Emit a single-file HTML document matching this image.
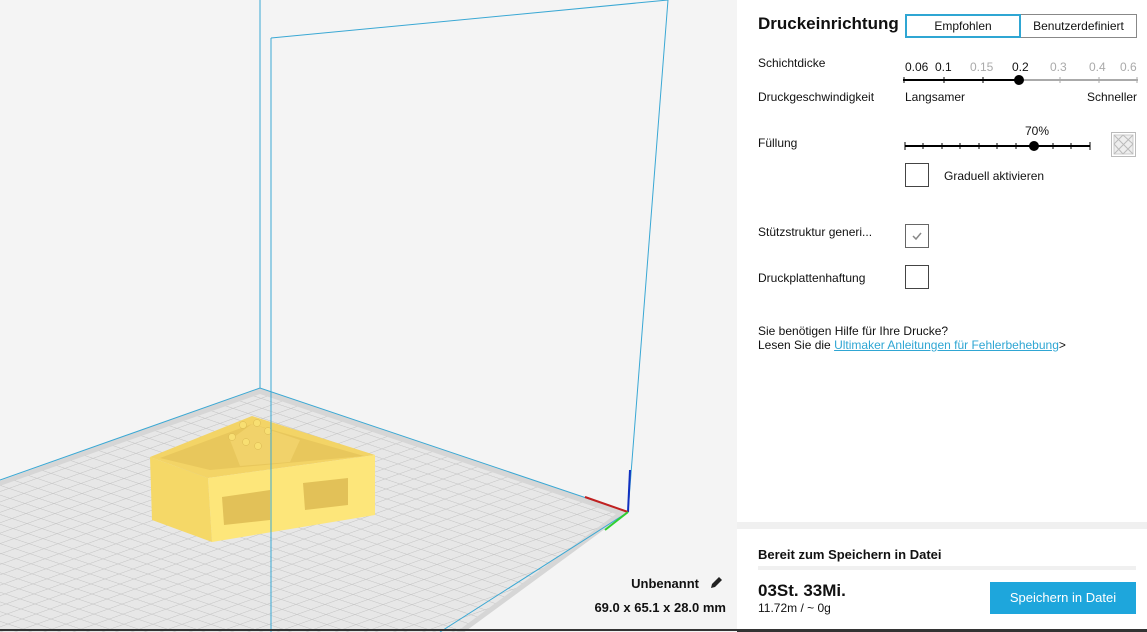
<!DOCTYPE html>
<html><head><meta charset="utf-8"><style>
*{margin:0;padding:0;box-sizing:border-box}
body{width:1147px;height:632px;overflow:hidden;background:#f4f4f4;font-family:"Liberation Sans",sans-serif;color:#111;position:relative}
.vp{position:absolute;left:0;top:0;width:737px;height:632px}
.panel{position:absolute;left:737px;top:0;width:410px;height:632px;background:#fff}
.t{position:absolute;white-space:nowrap}
.s{font-size:12px}
.cb{position:absolute;width:24px;height:24px;border:1px solid #444;background:#fff}
</style></head><body>
<svg class="vp" width="737" height="632" viewBox="0 0 737 632">
<defs>
<pattern id="g" width="10" height="10" patternUnits="userSpaceOnUse" patternTransform="matrix(1.5 0.505 -1.4 0.5 260 388)">
<rect width="10" height="10" fill="#e7e7e7"/>
<path d="M0 0H10M0 0V10" stroke="#c6c6c6" stroke-width="1.1" fill="none"/>
</pattern>
</defs>
<rect width="737" height="632" fill="#f4f4f4"/>
<polygon points="260,388 628,512 440,650 -40,650 -40,495" fill="#d6d6d6"/>
<polygon points="260,394 616,514 432,650 -40,650 -40,500" fill="url(#g)"/>
<g stroke="#3aa8d4" stroke-width="1" fill="none">
<polyline points="0,480 260,388 628,512 440,632"/>
<line x1="260" y1="0" x2="260" y2="388"/>
<line x1="271" y1="38" x2="271" y2="632"/>
<line x1="271" y1="38" x2="668" y2="0"/>
<line x1="668" y1="0" x2="628" y2="512"/>
</g>
<line x1="630" y1="470" x2="628" y2="512" stroke="#1030c0" stroke-width="2"/>
<line x1="585" y1="497" x2="628" y2="512" stroke="#c02020" stroke-width="2"/>
<line x1="628" y1="512" x2="605" y2="530" stroke="#30d030" stroke-width="2"/>
<!-- model -->
<polygon points="150,457 252,416 375,455 208,478" fill="#f3d466"/>
<polygon points="160,458 252,424 364,456 210,470" fill="#e8c75c"/>
<polygon points="230,440 252,424 300,440 290,462 240,466" fill="#f1d26a"/>
<polygon points="208,478 375,455 375,515 212,542" fill="#fde67a"/>
<polygon points="150,457 208,478 212,542 152,520" fill="#f5d867"/>
<polygon points="222,497 270,490 270,520 224,525" fill="#e2c158"/>
<polygon points="303,483 348,478 348,505 305,510" fill="#e2c158"/>
<g fill="#f8df72" stroke="#d9b850" stroke-width="0.5"><circle cx="243" cy="425" r="3.5"/><circle cx="257" cy="423" r="3.5"/><circle cx="268" cy="431" r="3.5"/><circle cx="232" cy="437" r="3.5"/><circle cx="246" cy="442" r="3.5"/><circle cx="258" cy="446" r="3.5"/></g>
<line x1="271" y1="420" x2="271" y2="545" stroke="#3aa8d4"/>
<line x1="0" y1="630" x2="737" y2="630" stroke="#333" stroke-width="2"/>
</svg>
<div class="t" style="right:448px;top:576px;font-size:13px;font-weight:bold">Unbenannt</div>
<svg style="position:absolute;left:708px;top:575px" width="16" height="16" viewBox="0 0 16 16"><path d="M3 13l1-4 7-7 3 3-7 7z" fill="#222"/></svg>
<div class="t" style="right:421px;top:600px;font-size:13px;font-weight:bold">69.0 x 65.1 x 28.0 mm</div>

<div class="panel"></div>
<div class="t" style="left:758px;top:14px;font-size:17px;font-weight:bold">Druckeinrichtung</div>
<div style="position:absolute;left:905px;top:14px;width:116px;height:24px;border:2px solid #2fa6d3;font-size:12px;text-align:center;line-height:20px">Empfohlen</div>
<div style="position:absolute;left:1021px;top:14px;width:116px;height:24px;border:1px solid #888;border-left:none;font-size:12px;text-align:center;line-height:22px">Benutzerdefiniert</div>
<div class="t s" style="left:758px;top:56px">Schichtdicke</div>
<div class="t s" style="left:905px;top:60px">0.06</div>
<div class="t s" style="left:935px;top:60px">0.1</div>
<div class="t s" style="left:970px;top:60px;color:#aaa">0.15</div>
<div class="t s" style="left:1012px;top:60px">0.2</div>
<div class="t s" style="left:1050px;top:60px;color:#aaa">0.3</div>
<div class="t s" style="left:1089px;top:60px;color:#aaa">0.4</div>
<div class="t s" style="left:1120px;top:60px;color:#aaa">0.6</div>
<svg style="position:absolute;left:900px;top:72px" width="240" height="16">
<line x1="3" y1="8" x2="120" y2="8" stroke="#000" stroke-width="2"/>
<line x1="120" y1="8" x2="238" y2="8" stroke="#aaa" stroke-width="2"/>
<g stroke="#000"><line x1="4" y1="5" x2="4" y2="11"/><line x1="44" y1="5" x2="44" y2="11"/><line x1="83" y1="5" x2="83" y2="11"/></g>
<g stroke="#aaa"><line x1="160" y1="5" x2="160" y2="11"/><line x1="199" y1="5" x2="199" y2="11"/><line x1="237" y1="5" x2="237" y2="11"/></g>
<circle cx="119" cy="8" r="5" fill="#000"/></svg>
<div class="t s" style="left:758px;top:90px">Druckgeschwindigkeit</div>
<div class="t s" style="left:905px;top:90px">Langsamer</div>
<div class="t s" style="left:1087px;top:90px">Schneller</div>
<div class="t s" style="left:758px;top:136px">Füllung</div>
<div class="t s" style="left:1025px;top:124px">70%</div>
<svg style="position:absolute;left:900px;top:138px" width="195" height="16">
<line x1="5" y1="8" x2="190" y2="8" stroke="#000" stroke-width="2"/>
<g stroke="#000"><line x1="5" y1="4" x2="5" y2="12"/><line x1="23" y1="5" x2="23" y2="11"/><line x1="42" y1="5" x2="42" y2="11"/><line x1="60" y1="5" x2="60" y2="11"/><line x1="79" y1="5" x2="79" y2="11"/><line x1="97" y1="5" x2="97" y2="11"/><line x1="116" y1="5" x2="116" y2="11"/><line x1="153" y1="5" x2="153" y2="11"/><line x1="171" y1="5" x2="171" y2="11"/><line x1="190" y1="4" x2="190" y2="12"/></g>
<circle cx="134" cy="8" r="5" fill="#000"/></svg>
<svg style="position:absolute;left:1111px;top:132px" width="25" height="25"><rect x="0.5" y="0.5" width="24" height="24" fill="#fff" stroke="#bbb"/><rect x="3" y="3" width="19" height="19" fill="#eee" stroke="#ccc"/><path d="M3 3L22 22M3 22L22 3M3 12L12 3M12 22L22 12M3 12L12 22M12 3L22 12" stroke="#bbb" fill="none"/></svg>
<div class="cb" style="left:905px;top:163px"></div>
<div class="t s" style="left:944px;top:169px">Graduell aktivieren</div>
<div class="t s" style="left:758px;top:225px">Stützstruktur generi...</div>
<div class="cb" style="left:905px;top:224px;border-color:#666"><svg width="22" height="22"><path d="M7 11l3 3 5-6" stroke="#888" stroke-width="1.5" fill="none"/></svg></div>
<div class="t s" style="left:758px;top:271px">Druckplattenhaftung</div>
<div class="cb" style="left:905px;top:265px"></div>
<div class="t s" style="left:758px;top:324px">Sie benötigen Hilfe für Ihre Drucke?</div>
<div class="t s" style="left:758px;top:338px">Lesen Sie die <span style="color:#2fa6d3;text-decoration:underline">Ultimaker Anleitungen für Fehlerbehebung</span>&gt;</div>
<div style="position:absolute;left:737px;top:522px;width:410px;height:7px;background:#f0f0f0"></div>
<div class="t" style="left:758px;top:547px;font-size:13px;font-weight:bold">Bereit zum Speichern in Datei</div>
<div style="position:absolute;left:758px;top:566px;width:378px;height:4px;background:#f0f0f0"></div>
<div class="t" style="left:758px;top:581px;font-size:17px;font-weight:bold">03St. 33Mi.</div>
<div class="t s" style="left:758px;top:601px">11.72m / ~ 0g</div>
<div style="position:absolute;left:990px;top:582px;width:146px;height:32px;background:#1ea6dc;color:#fff;font-size:13px;text-align:center;line-height:32px">Speichern in Datei</div>
<div style="position:absolute;left:737px;top:629px;width:410px;height:3px;background:#333"></div>
</body></html>
